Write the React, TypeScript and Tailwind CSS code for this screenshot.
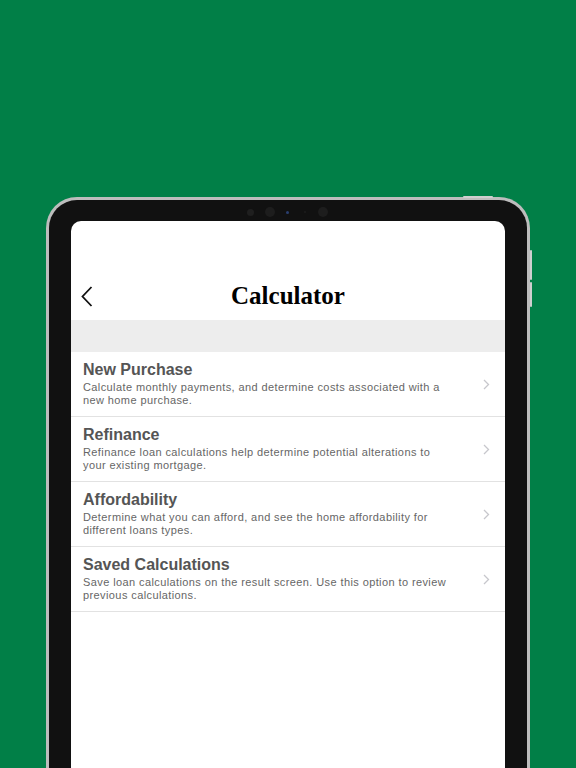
import React from "react";

interface CalcOption {
  title: string;
  lines: string[];
}

const options: CalcOption[] = [
  {
    title: "New Purchase",
    lines: ["Calculate monthly payments, and determine costs associated with a", "new home purchase."],
  },
  {
    title: "Refinance",
    lines: ["Refinance loan calculations help determine potential alterations to", "your existing mortgage."],
  },
  {
    title: "Affordability",
    lines: ["Determine what you can afford, and see the home affordability for", "different loans types."],
  },
  {
    title: "Saved Calculations",
    lines: ["Save loan calculations on the result screen. Use this option to review", "previous calculations."],
  },
];

function OptionRow({ option }: { option: CalcOption }) {
  return (
    <div className="flex items-center border-b border-[#e2e2e2] pl-[12px] pr-[15px] pt-[7px] pb-[9px]">
      <div className="flex-1 min-w-0">
        <div className="text-[16px] leading-[21px] font-bold text-[#555555]">{option.title}</div>
        <div className="mt-[1px] text-[11px] leading-[13px] tracking-[0.4px] text-[#666666] whitespace-nowrap">
          {option.lines.map((l, i) => (
            <div key={i}>{l}</div>
          ))}
        </div>
      </div>
      <svg width="7" height="11" viewBox="0 0 7 11" className="shrink-0 mt-[2px]">
        <polyline points="1,1 5.5,5.5 1,10" fill="none" stroke="#c7c7cc" strokeWidth="1.3" />
      </svg>
    </div>
  );
}

export default function App() {
  return (
    <div
      className="h-[768px] w-[576px] overflow-hidden bg-[#017f47] pt-[197px] pl-[46px]"
      style={{ fontFamily: '"Liberation Sans", Arial, sans-serif' }}
    >
      {/* device */}
      <div className="relative w-[484px] h-[620px] rounded-t-[31px] bg-[#bdbdbd] p-[3px]">
        {/* top button */}
        <div className="absolute -top-[1px] left-[417px] h-[2px] w-[30px] rounded-full bg-[#cfcfcf]" />
        {/* volume buttons */}
        <div className="absolute top-[53px] -right-[2px] flex flex-col gap-[2px]">
          <div className="h-[30px] w-[2px] rounded-full bg-[#cfcfcf]" />
          <div className="h-[25px] w-[2px] rounded-full bg-[#cfcfcf]" />
        </div>

        <div className="relative h-full rounded-t-[28px] bg-[#111111] px-[22px] pt-[21px]">
          {/* cameras */}
          <div className="absolute left-[198px] top-[7px] flex h-[10px] items-center">
            <div className="h-[7px] w-[7px] rounded-full bg-[#1f1f1f]" />
            <div className="ml-[11px] h-[10px] w-[10px] rounded-full bg-[#1d1d1d]" />
            <div className="ml-[11px] h-[3px] w-[3px] rounded-full bg-[#2a3f70]" />
            <div className="ml-[15px] h-[2px] w-[2px] rounded-full bg-[#1c1c1c]" />
            <div className="ml-[12px] h-[10px] w-[10px] rounded-full bg-[#1d1d1d]" />
          </div>

          {/* screen */}
          <div className="h-full rounded-t-[10px] bg-white overflow-hidden">
            <div className="h-[49px]" />
            <div className="grid h-[50px] grid-cols-[1fr_auto_1fr] items-center">
              <div className="pl-[10px] pt-[2px]">
                <svg width="12" height="21" viewBox="0 0 12 21" className="block">
                  <polyline points="10.5,1 1.5,10.5 10.5,20" fill="none" stroke="#111111" strokeWidth="1.8" />
                </svg>
              </div>
              <h1
                className="text-[25px] font-bold text-black pt-[2px]"
                style={{ fontFamily: '"Liberation Serif", "Times New Roman", serif' }}
              >
                Calculator
              </h1>
              <div />
            </div>
            <div className="h-[32px] bg-[#ededed]" />
            {options.map((o) => (
              <OptionRow key={o.title} option={o} />
            ))}
          </div>
        </div>
      </div>
    </div>
  );
}
